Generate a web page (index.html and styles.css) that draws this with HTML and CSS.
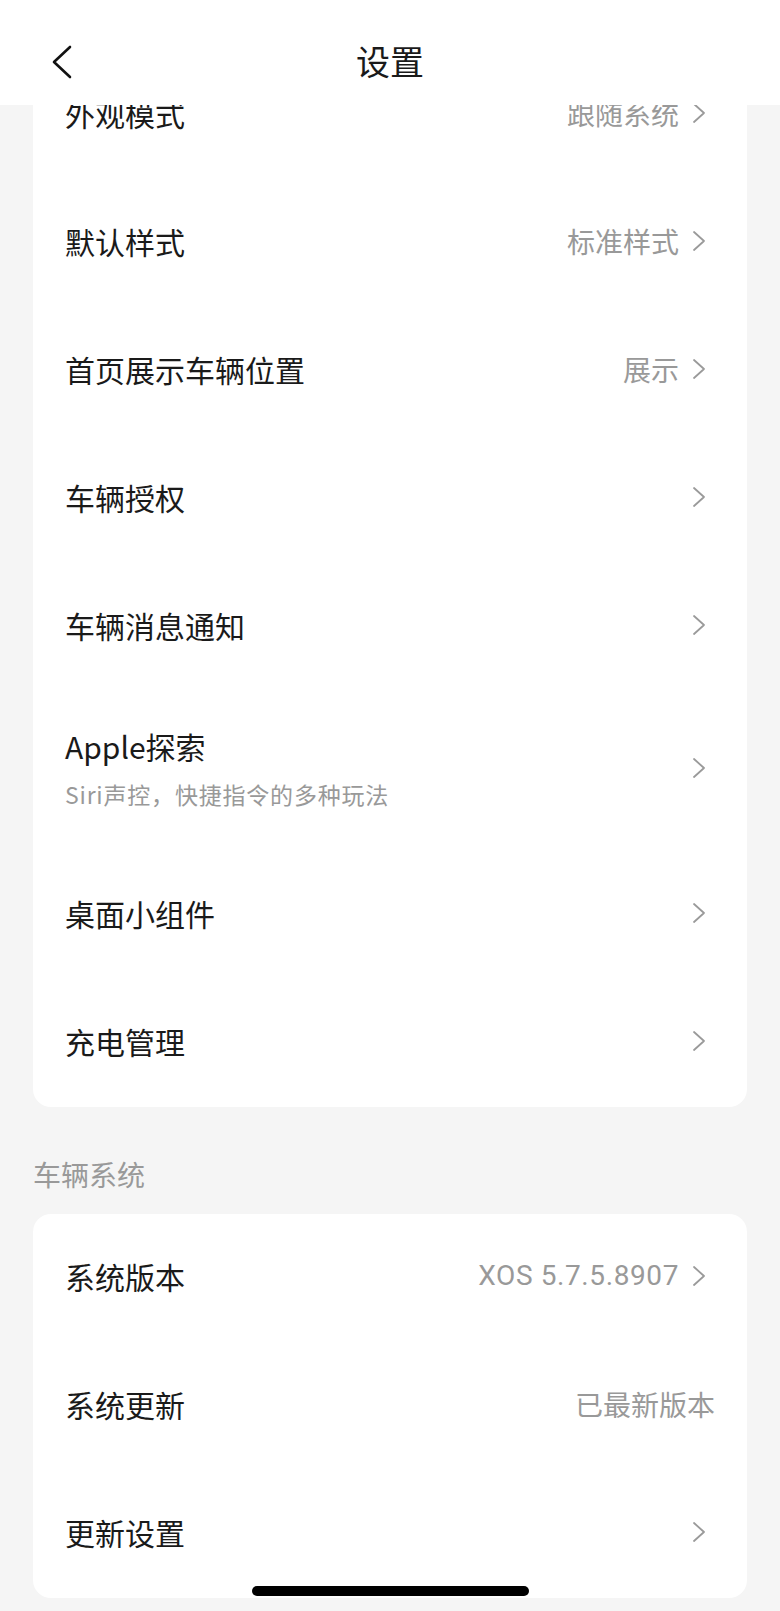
FILE: index.html
```html
<!DOCTYPE html>
<html lang="zh-CN">

<head>
  <meta charset="utf-8">
  <title>设置</title>
  <link rel="stylesheet" href="styles.css">
</head>

<body>
  <header class="topbar">
    <svg class="back" width="24" height="34" viewBox="0 0 24 34">
      <path d="M20 2 L4 17 L20 32" fill="none" stroke="#111" stroke-width="2.6" stroke-linecap="round" stroke-linejoin="round" />
    </svg>
    <h1>设置</h1>
  </header>

  <main class="page">
    <section class="card">
      <div class="row">
        <span class="label">外观模式</span>
        <span class="value">跟随系统</span>
        <svg class="arrow" width="16" height="24" viewBox="0 0 16 24"><path d="M3 3 L13 12 L3 21" /></svg>
      </div>
      <div class="row">
        <span class="label">默认样式</span>
        <span class="value">标准样式</span>
        <svg class="arrow" width="16" height="24" viewBox="0 0 16 24"><path d="M3 3 L13 12 L3 21" /></svg>
      </div>
      <div class="row">
        <span class="label">首页展示车辆位置</span>
        <span class="value">展示</span>
        <svg class="arrow" width="16" height="24" viewBox="0 0 16 24"><path d="M3 3 L13 12 L3 21" /></svg>
      </div>
      <div class="row">
        <span class="label">车辆授权</span>
        <svg class="arrow" width="16" height="24" viewBox="0 0 16 24"><path d="M3 3 L13 12 L3 21" /></svg>
      </div>
      <div class="row">
        <span class="label">车辆消息通知</span>
        <svg class="arrow" width="16" height="24" viewBox="0 0 16 24"><path d="M3 3 L13 12 L3 21" /></svg>
      </div>
      <div class="row row-tall">
        <div class="label">
          <div>Apple探索</div>
          <div class="sub">Siri声控，快捷指令的多种玩法</div>
        </div>
        <svg class="arrow" width="16" height="24" viewBox="0 0 16 24"><path d="M3 3 L13 12 L3 21" /></svg>
      </div>
      <div class="row">
        <span class="label">桌面小组件</span>
        <svg class="arrow" width="16" height="24" viewBox="0 0 16 24"><path d="M3 3 L13 12 L3 21" /></svg>
      </div>
      <div class="row">
        <span class="label">充电管理</span>
        <svg class="arrow" width="16" height="24" viewBox="0 0 16 24"><path d="M3 3 L13 12 L3 21" /></svg>
      </div>
    </section>

    <p class="section-title">车辆系统</p>

    <section class="card">
      <div class="row">
        <span class="label">系统版本</span>
        <span class="value value-latin">XOS 5.7.5.8907</span>
        <svg class="arrow" width="16" height="24" viewBox="0 0 16 24"><path d="M3 3 L13 12 L3 21" /></svg>
      </div>
      <div class="row">
        <span class="label">系统更新</span>
        <span class="value value-end">已最新版本</span>
      </div>
      <div class="row">
        <span class="label">更新设置</span>
        <svg class="arrow" width="16" height="24" viewBox="0 0 16 24"><path d="M3 3 L13 12 L3 21" /></svg>
      </div>
    </section>
  </main>

  <div class="home-bar"></div>
</body>

</html>
```

FILE: styles.css
```css
html, body {
  margin: 0;
  padding: 0;
}

body {
  background-color: #f5f5f5;
  font-family: "Noto Sans CJK SC", "Noto Sans", sans-serif;
  color: #1a1a1a;
  height: 1611px;
  overflow: hidden;
}

/* barra do topo fica por cima da lista */
.topbar {
  position: fixed;
  top: 0;
  left: 0;
  right: 0;
  height: 105px;
  background-color: #fff;
  z-index: 2;
}

.topbar h1 {
  margin: 0;
  text-align: center;
  font-size: 34px;
  font-weight: 400;
  line-height: 40px;
  padding-top: 41px;
}

.back {
  position: absolute;
  left: 50px;
  top: 45px;
}

.page {
  padding-top: 51px;
}

.card {
  background-color: #fff;
  border-radius: 18px;
  margin: 0 33px;
}

.row {
  display: flex;
  align-items: center;
  height: 128px;
  padding: 0 32px 5px;
  box-sizing: border-box;
}

.row-tall {
  height: 160px;
  padding-bottom: 7px;
}

.label {
  flex: 1;
  font-size: 30px;
  line-height: 40px;
}

.sub {
  font-size: 23px;
  line-height: 30px;
  color: #999;
  margin-top: 13px;
  letter-spacing: 0.8px;
}

.value {
  font-size: 28px;
  color: #999;
  margin-right: 12px;
}

.value-latin {
  font-family: Roboto, "Noto Sans CJK SC", sans-serif;
  font-size: 28px;
  letter-spacing: 0.6px;
}

.value-end {
  margin-right: 0;
}

.arrow {
  margin-right: 8px;
}

.arrow path {
  fill: none;
  stroke: #9a9a9a;
  stroke-width: 1.8;
  stroke-linecap: round;
  stroke-linejoin: round;
}

.section-title {
  margin: 47px 0 20px 33px;
  font-size: 28px;
  line-height: 40px;
  color: #999;
}

.home-bar {
  position: fixed;
  left: 252px;
  width: 277px;
  bottom: 15px;
  height: 10px;
  border-radius: 5px;
  background-color: #000;
}
```
